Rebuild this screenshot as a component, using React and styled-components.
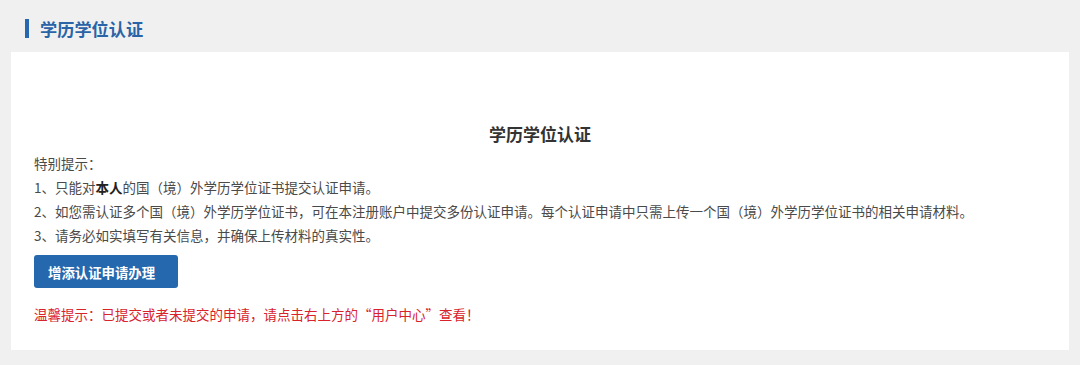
import React from 'react';
import styled, { createGlobalStyle } from 'styled-components';

const GlobalStyle = createGlobalStyle`
  html, body {
    margin: 0;
    padding: 0;
    background: #f0f0f0;
  }
  body {
    font-family: "Noto Sans CJK SC", "Noto Sans", sans-serif;
  }
`;

const Page = styled.div`
  width: 1080px;
  height: 365px;
  background: #f0f0f0;
  padding: 0 11px;
  box-sizing: border-box;
  overflow: hidden;
`;

const PageHeader = styled.div`
  height: 52px;
  display: flex;
  align-items: center;
  padding-left: 14px;
  padding-top: 5px;
  box-sizing: border-box;
`;

const HeaderBar = styled.span`
  width: 4px;
  height: 19px;
  background: #2667ad;
  margin-right: 11px;
`;

const HeaderTitle = styled.h1`
  margin: 0;
  font-size: 17.2px;
  font-weight: 700;
  color: #2a63a6;
  line-height: 1;
`;

const Panel = styled.div`
  background: #fff;
  height: 298px;
  padding: 69px 23px 0;
  box-sizing: border-box;
`;

const PanelTitle = styled.h2`
  margin: 0 0 4px;
  text-align: center;
  font-size: 17px;
  font-weight: 700;
  color: #333;
  line-height: 26px;
`;

const NoticeList = styled.div`
  font-size: 13.5px;
  color: #4a4a4a;
  line-height: 24px;
`;

const Line = styled.p`
  margin: 0;
  white-space: nowrap;
`;

const Strong = styled.b`
  font-weight: 600;
  color: #222;
`;

const AddButton = styled.button`
  margin-top: 8px;
  width: 144px;
  height: 33px;
  border: none;
  border-radius: 3px;
  background: #2568ad;
  color: #fff;
  font-family: inherit;
  font-size: 13.4px;
  font-weight: 600;
  text-align: left;
  padding: 0 0 0 14px;
  cursor: pointer;
`;

const Tip = styled.p`
  margin: 16px 0 0;
  font-size: 13.5px;
  line-height: 20px;
  color: #d9232c;
  white-space: nowrap;
`;

export default function App() {
  return (
    <>
      <GlobalStyle />
      <Page>
        <PageHeader>
          <HeaderBar />
          <HeaderTitle>学历学位认证</HeaderTitle>
        </PageHeader>
        <Panel>
          <PanelTitle>学历学位认证</PanelTitle>
          <NoticeList>
            <Line>特别提示：</Line>
            <Line>1、只能对<Strong>本人</Strong>的国（境）外学历学位证书提交认证申请。</Line>
            <Line>2、如您需认证多个国（境）外学历学位证书，可在本注册账户中提交多份认证申请。每个认证申请中只需上传一个国（境）外学历学位证书的相关申请材料。</Line>
            <Line>3、请务必如实填写有关信息，并确保上传材料的真实性。</Line>
          </NoticeList>
          <AddButton>增添认证申请办理</AddButton>
          <Tip>温馨提示：已提交或者未提交的申请，请点击右上方的“用户中心”查看！</Tip>
        </Panel>
      </Page>
    </>
  );
}
